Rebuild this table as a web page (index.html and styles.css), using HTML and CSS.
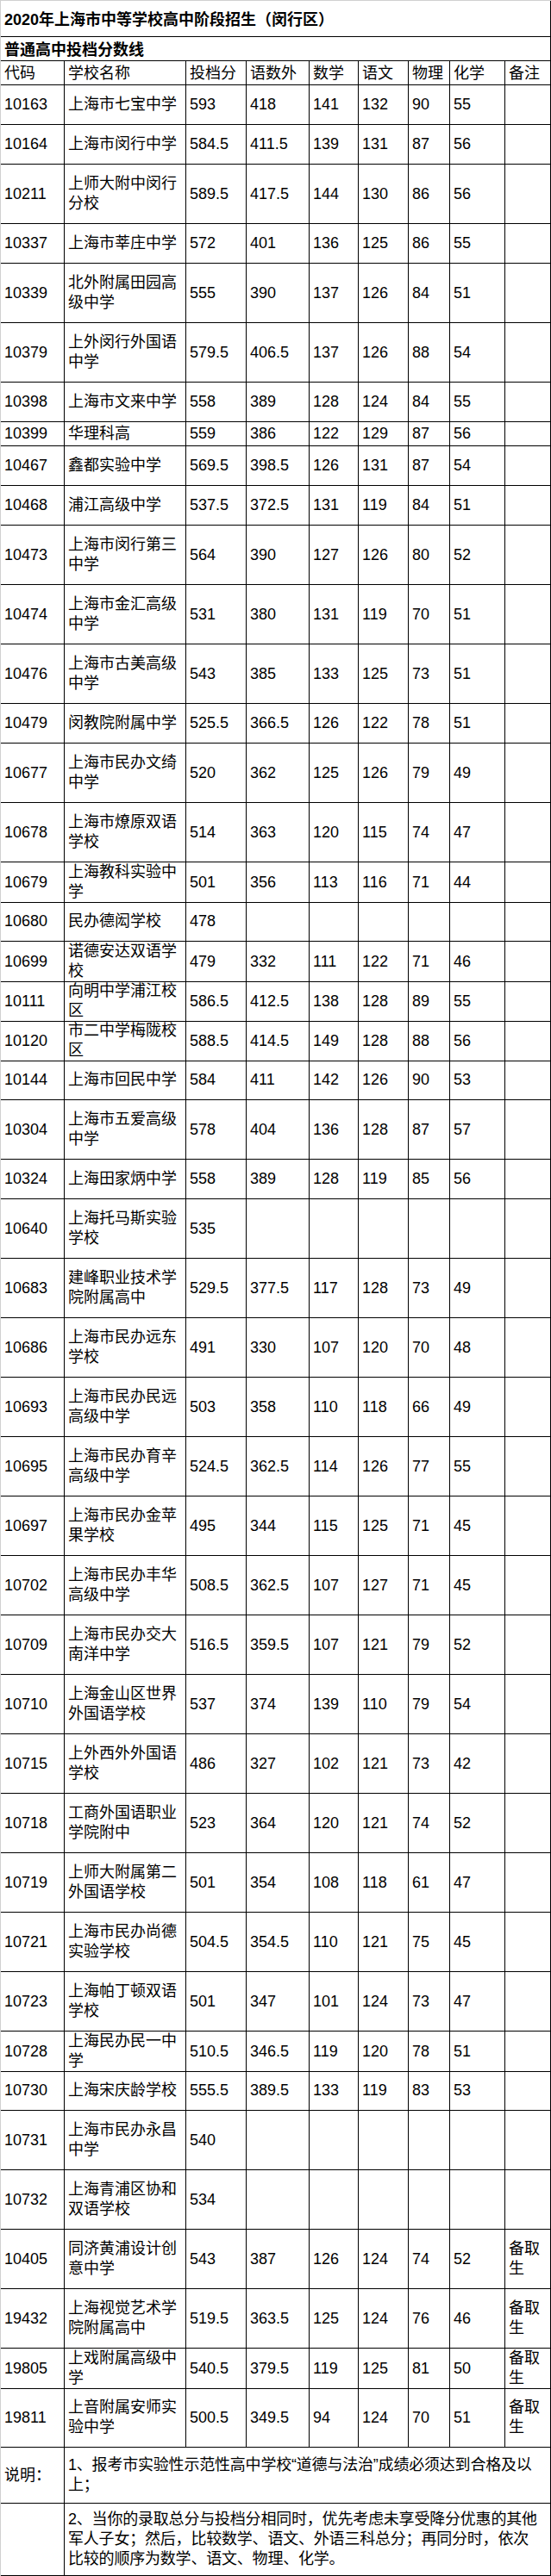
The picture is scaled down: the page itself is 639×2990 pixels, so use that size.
FILE: index.html
```html
<!DOCTYPE html>
<html lang="zh-CN">
<head>
<meta charset="utf-8">
<title>2020年上海市中等学校高中阶段招生（闵行区）</title>
<link rel="stylesheet" href="styles.css">
</head>
<body>
<div class="sheet">
  <div class="row r42"><div class="span title">2020年上海市中等学校高中阶段招生（闵行区）</div></div>
  <div class="row r28"><div class="span sub">普通高中投档分数线</div></div>
  <div class="row r28 head"><div>代码</div><div>学校名称</div><div>投档分</div><div>语数外</div><div>数学</div><div>语文</div><div>物理</div><div>化学</div><div>备注</div></div>

  <div class="row r46"><div>10163</div><div>上海市七宝中学</div><div>593</div><div>418</div><div>141</div><div>132</div><div>90</div><div>55</div><div></div></div>
  <div class="row r46"><div>10164</div><div>上海市闵行中学</div><div>584.5</div><div>411.5</div><div>139</div><div>131</div><div>87</div><div>56</div><div></div></div>
  <div class="row r69"><div>10211</div><div>上师大附中闵行分校</div><div>589.5</div><div>417.5</div><div>144</div><div>130</div><div>86</div><div>56</div><div></div></div>
  <div class="row r46"><div>10337</div><div>上海市莘庄中学</div><div>572</div><div>401</div><div>136</div><div>125</div><div>86</div><div>55</div><div></div></div>
  <div class="row r69"><div>10339</div><div>北外附属田园高级中学</div><div>555</div><div>390</div><div>137</div><div>126</div><div>84</div><div>51</div><div></div></div>
  <div class="row r69"><div>10379</div><div>上外闵行外国语中学</div><div>579.5</div><div>406.5</div><div>137</div><div>126</div><div>88</div><div>54</div><div></div></div>
  <div class="row r46"><div>10398</div><div>上海市文来中学</div><div>558</div><div>389</div><div>128</div><div>124</div><div>84</div><div>55</div><div></div></div>
  <div class="row r28"><div>10399</div><div>华理科高</div><div>559</div><div>386</div><div>122</div><div>129</div><div>87</div><div>56</div><div></div></div>
  <div class="row r46"><div>10467</div><div>鑫都实验中学</div><div>569.5</div><div>398.5</div><div>126</div><div>131</div><div>87</div><div>54</div><div></div></div>
  <div class="row r46"><div>10468</div><div>浦江高级中学</div><div>537.5</div><div>372.5</div><div>131</div><div>119</div><div>84</div><div>51</div><div></div></div>
  <div class="row r69"><div>10473</div><div>上海市闵行第三中学</div><div>564</div><div>390</div><div>127</div><div>126</div><div>80</div><div>52</div><div></div></div>
  <div class="row r69"><div>10474</div><div>上海市金汇高级中学</div><div>531</div><div>380</div><div>131</div><div>119</div><div>70</div><div>51</div><div></div></div>
  <div class="row r69"><div>10476</div><div>上海市古美高级中学</div><div>543</div><div>385</div><div>133</div><div>125</div><div>73</div><div>51</div><div></div></div>
  <div class="row r46"><div>10479</div><div>闵教院附属中学</div><div>525.5</div><div>366.5</div><div>126</div><div>122</div><div>78</div><div>51</div><div></div></div>
  <div class="row r69"><div>10677</div><div>上海市民办文绮中学</div><div>520</div><div>362</div><div>125</div><div>126</div><div>79</div><div>49</div><div></div></div>
  <div class="row r69"><div>10678</div><div>上海市燎原双语学校</div><div>514</div><div>363</div><div>120</div><div>115</div><div>74</div><div>47</div><div></div></div>
  <div class="row r46"><div>10679</div><div>上海教科实验中学</div><div>501</div><div>356</div><div>113</div><div>116</div><div>71</div><div>44</div><div></div></div>
  <div class="row r46"><div>10680</div><div>民办德闳学校</div><div>478</div><div></div><div></div><div></div><div></div><div></div><div></div></div>
  <div class="row r46"><div>10699</div><div>诺德安达双语学校</div><div>479</div><div>332</div><div>111</div><div>122</div><div>71</div><div>46</div><div></div></div>
  <div class="row r46"><div>10111</div><div>向明中学浦江校区</div><div>586.5</div><div>412.5</div><div>138</div><div>128</div><div>89</div><div>55</div><div></div></div>
  <div class="row r46"><div>10120</div><div>市二中学梅陇校区</div><div>588.5</div><div>414.5</div><div>149</div><div>128</div><div>88</div><div>56</div><div></div></div>
  <div class="row r46"><div>10144</div><div>上海市回民中学</div><div>584</div><div>411</div><div>142</div><div>126</div><div>90</div><div>53</div><div></div></div>
  <div class="row r69"><div>10304</div><div>上海市五爱高级中学</div><div>578</div><div>404</div><div>136</div><div>128</div><div>87</div><div>57</div><div></div></div>
  <div class="row r46"><div>10324</div><div>上海田家炳中学</div><div>558</div><div>389</div><div>128</div><div>119</div><div>85</div><div>56</div><div></div></div>
  <div class="row r69"><div>10640</div><div>上海托马斯实验学校</div><div>535</div><div></div><div></div><div></div><div></div><div></div><div></div></div>
  <div class="row r69"><div>10683</div><div>建峰职业技术学院附属高中</div><div>529.5</div><div>377.5</div><div>117</div><div>128</div><div>73</div><div>49</div><div></div></div>
  <div class="row r69"><div>10686</div><div>上海市民办远东学校</div><div>491</div><div>330</div><div>107</div><div>120</div><div>70</div><div>48</div><div></div></div>
  <div class="row r69"><div>10693</div><div>上海市民办民远高级中学</div><div>503</div><div>358</div><div>110</div><div>118</div><div>66</div><div>49</div><div></div></div>
  <div class="row r69"><div>10695</div><div>上海市民办育辛高级中学</div><div>524.5</div><div>362.5</div><div>114</div><div>126</div><div>77</div><div>55</div><div></div></div>
  <div class="row r69"><div>10697</div><div>上海市民办金苹果学校</div><div>495</div><div>344</div><div>115</div><div>125</div><div>71</div><div>45</div><div></div></div>
  <div class="row r69"><div>10702</div><div>上海市民办丰华高级中学</div><div>508.5</div><div>362.5</div><div>107</div><div>127</div><div>71</div><div>45</div><div></div></div>
  <div class="row r69"><div>10709</div><div>上海市民办交大南洋中学</div><div>516.5</div><div>359.5</div><div>107</div><div>121</div><div>79</div><div>52</div><div></div></div>
  <div class="row r69"><div>10710</div><div>上海金山区世界外国语学校</div><div>537</div><div>374</div><div>139</div><div>110</div><div>79</div><div>54</div><div></div></div>
  <div class="row r69"><div>10715</div><div>上外西外外国语学校</div><div>486</div><div>327</div><div>102</div><div>121</div><div>73</div><div>42</div><div></div></div>
  <div class="row r69"><div>10718</div><div>工商外国语职业学院附中</div><div>523</div><div>364</div><div>120</div><div>121</div><div>74</div><div>52</div><div></div></div>
  <div class="row r69"><div>10719</div><div>上师大附属第二外国语学校</div><div>501</div><div>354</div><div>108</div><div>118</div><div>61</div><div>47</div><div></div></div>
  <div class="row r69"><div>10721</div><div>上海市民办尚德实验学校</div><div>504.5</div><div>354.5</div><div>110</div><div>121</div><div>75</div><div>45</div><div></div></div>
  <div class="row r69"><div>10723</div><div>上海帕丁顿双语学校</div><div>501</div><div>347</div><div>101</div><div>124</div><div>73</div><div>47</div><div></div></div>
  <div class="row r46"><div>10728</div><div>上海民办民一中学</div><div>510.5</div><div>346.5</div><div>119</div><div>120</div><div>78</div><div>51</div><div></div></div>
  <div class="row r46"><div>10730</div><div>上海宋庆龄学校</div><div>555.5</div><div>389.5</div><div>133</div><div>119</div><div>83</div><div>53</div><div></div></div>
  <div class="row r69"><div>10731</div><div>上海市民办永昌中学</div><div>540</div><div></div><div></div><div></div><div></div><div></div><div></div></div>
  <div class="row r69"><div>10732</div><div>上海青浦区协和双语学校</div><div>534</div><div></div><div></div><div></div><div></div><div></div><div></div></div>
  <div class="row r69"><div>10405</div><div>同济黄浦设计创意中学</div><div>543</div><div>387</div><div>126</div><div>124</div><div>74</div><div>52</div><div>备取生</div></div>
  <div class="row r69"><div>19432</div><div>上海视觉艺术学院附属高中</div><div>519.5</div><div>363.5</div><div>125</div><div>124</div><div>76</div><div>46</div><div>备取生</div></div>
  <div class="row r46"><div>19805</div><div>上戏附属高级中学</div><div>540.5</div><div>379.5</div><div>119</div><div>125</div><div>81</div><div>50</div><div>备取生</div></div>
  <div class="row r69"><div>19811</div><div>上音附属安师实验中学</div><div>500.5</div><div>349.5</div><div>94</div><div>124</div><div>70</div><div>51</div><div>备取生</div></div>

  <div class="row r65"><div>说明：</div><div class="note">1、报考市实验性示范性高中学校“道德与法治”成绩必须达到合格及以<br>上；</div></div>
  <div class="row r84"><div></div><div class="note">2、当你的录取总分与投档分相同时，优先考虑未享受降分优惠的其他<br>军人子女；然后，比较数学、语文、外语三科总分；再同分时，依次<br>比较的顺序为数学、语文、物理、化学。</div></div>
</div>
</body>
</html>
```

FILE: styles.css
```css
html, body {
  margin: 0;
  padding: 0;
  background: #ffffff;
}

body {
  font-family: "Liberation Sans Narrow", "Liberation Sans", "Noto Sans CJK SC", sans-serif;
  font-size: 18px;
  color: #000000;
}

.sheet {
  width: 638px;
  border-left: 1px solid #d0d0d0;
  border-top: 1px solid #d0d0d0;
}

.row {
  display: grid;
  grid-template-columns: 74px 141px 70px 73px 57px 58px 48px 64px 53px;
}

.row > div {
  box-sizing: border-box;
  border-right: 1px solid #000000;
  border-bottom: 1px solid #000000;
  padding-left: 4px;
  display: flex;
  align-items: center;
  line-height: 23px;
  min-width: 0;
}

.r28 { height: 28px; }
.r42 { height: 42px; }
.r46 { height: 46px; }
.r65 { height: 65px; }
.r69 { height: 69px; }
.r84 { height: 84px; }

.span {
  grid-column: 1 / -1;
}

.title {
  font-weight: bold;
  padding-top: 3px;
  font-family: "Liberation Sans", "Noto Sans CJK SC", sans-serif;
}

.sub {
  font-weight: bold;
  padding-top: 3px;
}

.head > div {
  padding-top: 2px;
}

.note {
  grid-column: 2 / -1;
  white-space: nowrap;
  letter-spacing: -0.2px;
}
```
